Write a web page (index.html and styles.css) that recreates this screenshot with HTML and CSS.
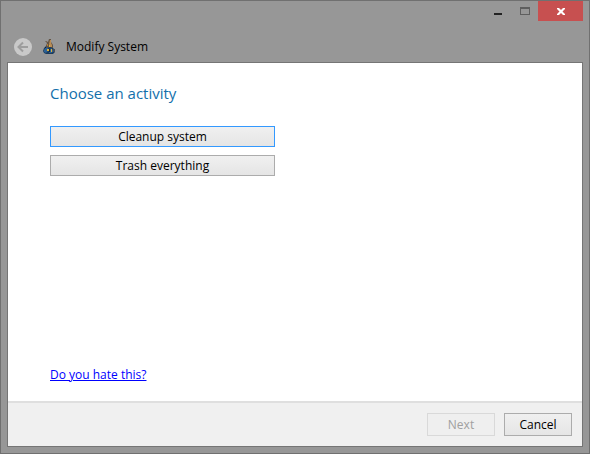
FILE: index.html
```html
<!DOCTYPE html>
<html lang="en">
<head>
<meta charset="utf-8">
<title>Modify System</title>
<link rel="stylesheet" href="styles.css">
</head>
<body>
<div class="window">
  <header class="titlebar">
    <div class="caption">
      <button class="caption-button minimize" type="button" aria-label="Minimize"><svg width="8" height="8" viewBox="0 0 8 8"><path d="M0 6h8v2H0z" fill="#222"/></svg></button>
      <button class="caption-button maximize" type="button" aria-label="Maximize" disabled><svg width="10" height="8" viewBox="0 0 10 8" shape-rendering="crispEdges"><path d="M0 0h10v8H0zM1 2v5h8V2z" fill="#5f5f5f" fill-rule="evenodd"/></svg></button>
      <button class="caption-button close" type="button" aria-label="Close"><svg width="8" height="7" viewBox="0 0 8 7"><path d="M0 0h2l2 2 2-2h2v1L5.500 3.500 8 6v1H6L4 5 2 7H0V6l2.500-2.500L0 1z" fill="#fff"/></svg></button>
    </div>
    <div class="heading">
      <button class="back" type="button" aria-label="Back" disabled><svg width="18" height="18" viewBox="0 0 18 18"><circle cx="9" cy="9" r="9" fill="#c9c9c9"/><path d="M14 9H5M9 4.500L4.500 9 9 13.500" fill="none" stroke="#9d9d9d" stroke-width="2"/></svg></button>
      <svg class="app-icon" width="14" height="16" viewBox="0 0 14 16">
        <path d="M5 6h4l2 3 2 2v2l-2 2H4l-2-1-1-2 1-3z" fill="#1d3c5c"/>
        <path d="M2 11l2-3 2 1v3l-2 2-2-1zM9 9l2 2v2l-2 1H7v-2z" fill="#2a6096"/>
        <path d="M3 2h1l2 1 1-3h2v3l2 3v3L8 8 5 9 4 7l1-3z" fill="#655545"/>
        <path d="M8 1h1v3l1 2v2H8L7 5z" fill="#b98d55"/>
        <path d="M5 5h1v2H5z" fill="#b47d3c"/>
        <path d="M7 6h1v2H7zM5 10h2v2H5zM9 10h1v3H9z" fill="#e0b236"/>
        <path d="M7 10h1v3H7zM3 8h1v1H3z" fill="#142335"/>
        <path d="M11 10h2v3h-2z" fill="#48505a"/>
      </svg>
      <span>Modify System</span>
    </div>
  </header>
  <main class="page">
    <section class="content">
      <h1>Choose an activity</h1>
      <div class="choices">
        <button class="button default" type="button">Cleanup system</button>
        <button class="button" type="button">Trash everything</button>
      </div>
      <a class="help" href="#">Do you hate this?</a>
    </section>
    <footer class="actions">
      <button class="button" type="button" disabled>Next</button>
      <button class="button" type="button">Cancel</button>
    </footer>
  </main>
</div>
</body>
</html>
```
FILE: styles.css
```css
* { box-sizing: border-box; }
body { margin: 0; font: 12px/16px "Open Sans", "Noto Sans", sans-serif; color: #000; }
button { font: inherit; color: inherit; padding: 0; }
svg { display: block; }
.window {
  min-height: 100vh;
  display: flex;
  flex-direction: column;
  padding: 0 6px 6px;
  border: 1px solid #707070;
  background: #979797;
}
.caption { display: flex; justify-content: flex-end; height: 20px; }
.caption-button {
  display: flex;
  justify-content: center;
  align-items: center;
  width: 27px;
  border: 0;
  background: transparent;
}
.caption-button.close { width: 45px; background: #c75050; }
.heading { display: flex; align-items: center; height: 41px; padding: 10px 7px 0; }
.back { border: 0; background: transparent; }
.app-icon { margin: 0 10px; }
.page {
  flex: 1;
  display: flex;
  flex-direction: column;
  border: 1px solid #757575;
  background: #fff;
}
.content { flex: 1; display: flex; flex-direction: column; align-items: flex-start; padding: 19px 42px 18px; }
h1 { margin: 0; font-size: 15px; line-height: 22px; font-weight: 400; color: #1370ab; }
.choices { display: flex; flex-direction: column; gap: 8px; width: 225px; margin-top: 22px; }
.button { height: 21px; border: 1px solid #acacac; background: linear-gradient(#f0f0f0, #e5e5e5); }
.button.default { border-color: #3399ff; }
.help { margin-top: auto; color: #00f; }
.actions {
  display: flex;
  justify-content: flex-end;
  gap: 9px;
  padding: 10px;
  border-top: 2px solid #dfdfdf;
  background: #f0f0f0;
}
.actions .button { width: 68px; height: 23px; }
.button:disabled { border-color: #d9d9d9; background: #efefef; color: #a0a0a0; }
```
